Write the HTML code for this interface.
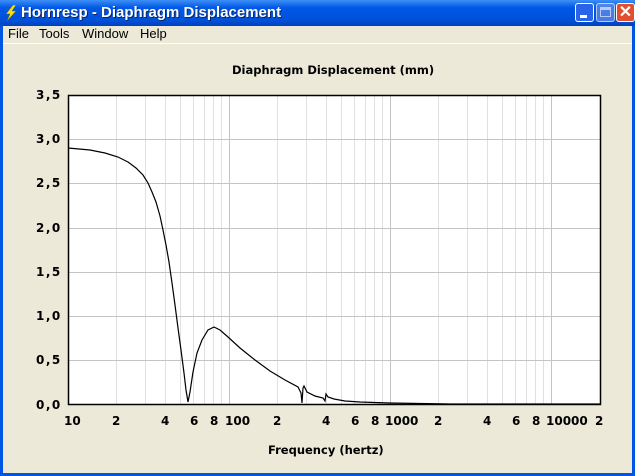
<!DOCTYPE html><html><head><style>
body{margin:0;width:635px;height:476px;overflow:hidden;background:#ece9d8;font-family:"Liberation Sans",sans-serif;position:relative}
.tb{position:absolute;left:0;top:0;width:635px;height:26px;background:linear-gradient(#3d8ef6,#0058e6 30%,#0050d8 80%,#0040b8);}
.tt{position:absolute;left:21px;top:4px;color:#fff;font-weight:bold;font-size:15px;text-shadow:1px 1px #0a246a}
.frame{position:absolute;top:26px;bottom:0;width:3px;background:#0055e5}
.menu{position:absolute;top:26px;left:3px;font-size:13px;color:#000}
.menu span{position:absolute;top:0}
.btn{position:absolute;top:3px;width:19px;height:19px;border:1px solid #fff;border-radius:3px;box-sizing:border-box}
.t{position:absolute;font-weight:bold;font-size:12px;color:#000;font-family:"DejaVu Sans","Liberation Sans",sans-serif}
.y{letter-spacing:1.5px}
</style></head><body>
<div class="tb"></div>
<svg style="position:absolute;left:4px;top:5px" width="14" height="16"><path d="M9 0 L2 9 L6 9 L3 16 L12 6 L8 6 L12 0Z" fill="#f0e020" stroke="#806000" stroke-width=".5"/></svg>
<div class="tt">Hornresp - Diaphragm Displacement</div>
<div class="btn" style="left:575px;background:#2a64e8"><div style="position:absolute;left:4px;top:11px;width:7px;height:3px;background:#fff"></div></div>
<div class="btn" style="left:596px;background:#6a8ee8;opacity:.7"><div style="position:absolute;left:3px;top:3px;width:11px;height:10px;border:1px solid #fff;border-top-width:3px;box-sizing:border-box"></div></div>
<div class="btn" style="left:616px;background:#e05030;color:#fff;font-size:16px;font-weight:bold;text-align:center;line-height:17px">✕</div>
<div class="frame" style="left:0"></div><div class="frame" style="right:0"></div>
<div style="position:absolute;left:0;bottom:0;width:635px;height:3px;background:#0055e5"></div>
<div class="menu"><span style="left:5px;top:0">File</span><span style="left:36px">Tools</span><span style="left:79px">Window</span><span style="left:137px">Help</span></div>
<div style="position:absolute;left:3px;top:43px;width:629px;height:1px;background:#fff"></div>
<div class="t" style="left:232px;top:63px;font-size:11.5px">Diaphragm Displacement (mm)</div>
<svg style="position:absolute;left:0;top:0" width="635" height="476">
<rect x="68" y="95" width="533" height="310" fill="#fff"/>
<g stroke="#e0e0e0" stroke-width="1">
<line x1="116.5" y1="95" x2="116.5" y2="405"/><line x1="145.5" y1="95" x2="145.5" y2="405"/><line x1="165.5" y1="95" x2="165.5" y2="405"/><line x1="180.5" y1="95" x2="180.5" y2="405"/><line x1="193.5" y1="95" x2="193.5" y2="405"/><line x1="204.5" y1="95" x2="204.5" y2="405"/><line x1="213.5" y1="95" x2="213.5" y2="405"/><line x1="221.5" y1="95" x2="221.5" y2="405"/>
<line x1="277.5" y1="95" x2="277.5" y2="405"/><line x1="306.5" y1="95" x2="306.5" y2="405"/><line x1="326.5" y1="95" x2="326.5" y2="405"/><line x1="341.5" y1="95" x2="341.5" y2="405"/><line x1="354.5" y1="95" x2="354.5" y2="405"/><line x1="365.5" y1="95" x2="365.5" y2="405"/><line x1="374.5" y1="95" x2="374.5" y2="405"/><line x1="382.5" y1="95" x2="382.5" y2="405"/>
<line x1="438.5" y1="95" x2="438.5" y2="405"/><line x1="467.5" y1="95" x2="467.5" y2="405"/><line x1="487.5" y1="95" x2="487.5" y2="405"/><line x1="502.5" y1="95" x2="502.5" y2="405"/><line x1="515.5" y1="95" x2="515.5" y2="405"/><line x1="526.5" y1="95" x2="526.5" y2="405"/><line x1="535.5" y1="95" x2="535.5" y2="405"/><line x1="543.5" y1="95" x2="543.5" y2="405"/>
</g>
<g stroke="#c4c4c4" stroke-width="1">
<line x1="229.5" y1="95" x2="229.5" y2="405"/><line x1="390.5" y1="95" x2="390.5" y2="405"/><line x1="551.5" y1="95" x2="551.5" y2="405"/>
<line x1="68" y1="139.5" x2="601" y2="139.5"/><line x1="68" y1="183.5" x2="601" y2="183.5"/><line x1="68" y1="228.5" x2="601" y2="228.5"/><line x1="68" y1="272.5" x2="601" y2="272.5"/><line x1="68" y1="316.5" x2="601" y2="316.5"/><line x1="68" y1="360.5" x2="601" y2="360.5"/>
</g>
<polyline fill="none" stroke="#000" stroke-width="1.2" points="68,148 90,150 105,153 118,157 128,162 136,168 143,175 148,183 152,192 156,202 160,216 163,230 166,245 169,262 172,283 175,305 178,328 181,350 184,373 186,390 188,402 190,392 193,372 197,353 202,340 208,330 214,327 220,330 228,337 240,348 255,360 270,371 285,380 298,387 301,393 302,403 303,388 304,386 307,392 315,396 323,398 325,401 326,394 328,397 334,399 345,401 360,402 390,403 450,404 600,404"/>
<rect x="68.5" y="95.5" width="532" height="309" fill="none" stroke="#000" stroke-width="1.5"/>
</svg>
<div class="t y" style="left:36px;top:88px">3,5</div><div class="t y" style="left:36px;top:132px">3,0</div><div class="t y" style="left:36px;top:176px">2,5</div><div class="t y" style="left:36px;top:221px">2,0</div><div class="t y" style="left:36px;top:265px">1,5</div><div class="t y" style="left:36px;top:309px">1,0</div><div class="t y" style="left:36px;top:353px">0,5</div><div class="t y" style="left:36px;top:398px">0,0</div>
<div class="t" style="left:64px;top:414px">10</div><div class="t" style="left:112px;top:414px">2</div><div class="t" style="left:161px;top:414px">4</div><div class="t" style="left:190px;top:414px">6</div><div class="t" style="left:210px;top:414px">8</div><div class="t" style="left:225px;top:414px">100</div>
<div class="t" style="left:273px;top:414px">2</div><div class="t" style="left:322px;top:414px">4</div><div class="t" style="left:351px;top:414px">6</div><div class="t" style="left:371px;top:414px">8</div><div class="t" style="left:385px;top:414px">1000</div>
<div class="t" style="left:434px;top:414px">2</div><div class="t" style="left:483px;top:414px">4</div><div class="t" style="left:512px;top:414px">6</div><div class="t" style="left:532px;top:414px">8</div><div class="t" style="left:546px;top:414px">10000</div><div class="t" style="left:595px;top:414px">2</div>
<div class="t" style="left:268px;top:443px;font-size:11.5px">Frequency (hertz)</div>
</body></html>
